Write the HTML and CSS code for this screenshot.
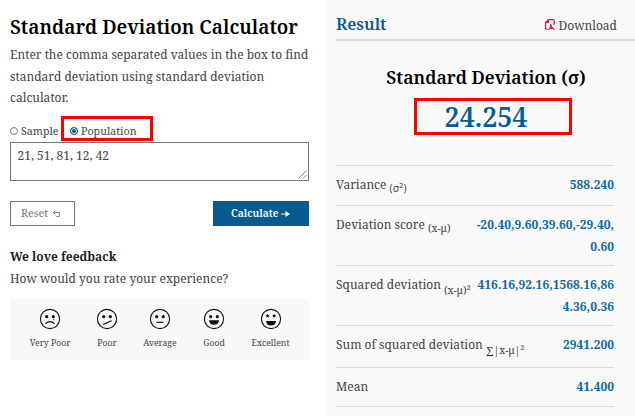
FILE: index.html
```html
<!DOCTYPE html>
<html lang="en">
<head>
<meta charset="utf-8">
<title>Standard Deviation Calculator</title>
<link rel="stylesheet" href="styles.css">
</head>
<body>
<main class="page">
  <section class="calculator">
    <h1 class="title">Standard Deviation Calculator</h1>
    <p class="intro"><span class="line">Enter the comma separated values in the box to find</span><span class="line">standard deviation using standard deviation</span><span class="line">calculator.</span></p>
    <div class="options">
      <label class="option"><span class="radio"></span><span class="sample">Sample</span></label>
      <label class="option selected"><span class="radio checked"></span><span class="population">Population</span></label>
    </div>
    <div class="values"><span>21, 51, 81, 12, 42</span>
      <svg class="grip" width="9" height="9" viewBox="0 0 9 9"><path d="M.5 8.500l8-8M5 8.500l3.500-3.500"/></svg>
    </div>
    <div class="actions">
      <div class="button reset"><span>Reset</span>
        <svg width="8" height="8" viewBox="0 0 8 8"><path d="M2.500 .5L.5 2.500 2.500 4.500M.5 2.500H6.500V6.500H3.500" fill="none" stroke="currentColor" stroke-width=".9"/></svg>
      </div>
      <div class="button calculate"><span>Calculate</span>
        <svg width="9" height="6" viewBox="0 0 9 6"><path d="M0 3h5" stroke="currentColor"/><path d="M4.500 0L9 3 4.500 6z" fill="currentColor"/></svg>
      </div>
    </div>
    <h2 class="feedback-title">We love feedback</h2>
    <p class="question">How would you rate your experience?</p>
    <div class="ratings">
      <div class="rating">
        <svg class="face" viewBox="0 0 22 22"><circle class="ring" cx="11" cy="11" r="9.600"/><circle cx="7.700" cy="8.700" r="1.600"/><circle cx="14.300" cy="8.700" r="1.600"/><path class="mouth" d="M6.500 15.800Q11 11.500 15.500 15.800"/><circle cx="14.700" cy="11.700" r=".6"/></svg>
        <span>Very Poor</span>
      </div>
      <div class="rating">
        <svg class="face" viewBox="0 0 22 22"><circle class="ring" cx="11" cy="11" r="9.600"/><circle cx="7.700" cy="8.700" r="1.600"/><circle cx="14.300" cy="8.700" r="1.600"/><path class="mouth" d="M6.800 16.500Q9 16 11 14.800T15.700 12.700"/></svg>
        <span>Poor</span>
      </div>
      <div class="rating">
        <svg class="face" viewBox="0 0 22 22"><circle class="ring" cx="11" cy="11" r="9.600"/><circle cx="7.700" cy="8.700" r="1.600"/><circle cx="14.300" cy="8.700" r="1.600"/><path class="mouth" d="M7.500 14.300H14.500"/></svg>
        <span>Average</span>
      </div>
      <div class="rating">
        <svg class="face" viewBox="0 0 22 22"><circle class="ring" cx="11" cy="11" r="9.600"/><circle cx="7.700" cy="8.700" r="1.600"/><circle cx="14.300" cy="8.700" r="1.600"/><path d="M6 12.300H16Q15.500 16.800 11 16.800T6 12.300z"/></svg>
        <span>Good</span>
      </div>
      <div class="rating">
        <svg class="face" viewBox="0 0 22 22"><circle class="ring" cx="11" cy="11" r="9.600"/><path d="M7.700 5.700l.5 1.300 1.500.2-1.100 1 .2 1.400-1.200-.7-1.300.7.3-1.400L5.500 7.200 7 7zM14.300 5.700l.5 1.300 1.500.2-1.100 1 .2 1.400-1.200-.7-1.300.7.3-1.400-1-1 1.500-.2zM6 13H16Q15.500 17.500 11 17.500T6 13z"/></svg>
        <span>Excellent</span>
      </div>
    </div>
  </section>
  <section class="result">
    <header class="result-head">
      <h2 class="result-title">Result</h2>
      <div class="download">
        <svg width="10" height="12" viewBox="0 0 10 12"><path d="M3.500.6H8.200Q9.200.6 9.200 1.600V6M3.500.6L.6 3.500V9.200Q.6 10.200 1.600 10.200H2.500M.6 3.500H3.500V.6M5.500 5Q6 8.500 9.500 10.500M5.800 5.500Q5.500 9.500 3.500 11M4.500 9.400H8.500" fill="none" stroke="#dc1830" stroke-width="1.200"/></svg>
        <span>Download</span>
      </div>
    </header>
    <h3 class="measure">Standard Deviation (σ)</h3>
    <div class="answer"><span>24.254</span></div>
    <dl class="stats">
      <div class="row w1"><dt>Variance <span class="symbol sans">(σ<sup>2</sup>)</span></dt><dd>588.240</dd></div>
      <div class="row w2"><dt>Deviation score <span class="symbol">(x-μ)</span></dt><dd>-20.40,9.60,39.60,-29.40,<br>0.60</dd></div>
      <div class="row w3"><dt>Squared deviation <span class="symbol low">(x-μ)²</span></dt><dd>416.16,92.16,1568.16,86<br>4.36,0.36</dd></div>
      <div class="row w4"><dt>Sum of squared deviation <span class="symbol low"><span class="sigma">∑</span>|x-μ|²</span></dt><dd>2941.200</dd></div>
      <div class="row w5"><dt>Mean</dt><dd>41.400</dd></div>
    </dl>
  </section>
</main>
</body>
</html>
```
FILE: styles.css
```css
* { box-sizing: border-box; }
body { margin: 0; background: #fff; color: #444; font-family: "Noto Serif", "Droid Serif", "DejaVu Serif Condensed", "DejaVu Serif", serif; font-size: 12px; }
h1, h2, h3, p, dl, dd { margin: 0; }
svg { display: block; flex: none; }
.page { display: grid; grid-template-columns: 326px 309px; width: 635px; height: 416px; overflow: hidden; white-space: nowrap; }
.calculator { padding: 14px 17px 0 10px; }
.title { color: #000; font-size: 19.15px; font-weight: 600; line-height: 27px; }
.intro { margin-top: 3px; line-height: 21.5px; font-size: 12px; }
.line { display: block; width: max-content; }
.options { display: flex; height: 25px; margin-top: 7.5px; }
.option { display: flex; align-items: center; gap: 3px; width: 51px; font-size: 10.7px; padding-top: 5px; }
.selected { width: 92px; border: 3px solid #f00; padding: 4px 0 0 6px; }
.radio { width: 8px; height: 8px; border: 1px solid #777; border-radius: 50%; background: #fff; flex: none; }
.checked { border-color: #075b91; background: #075b91; box-shadow: inset 0 0 0 1px #fff; }
.values { display: flex; justify-content: space-between; width: 299px; height: 39px; margin-top: 1px; border: 1px solid #767676; padding: 4px 1px 1px 6.5px; font-size: 12px; line-height: 17px; }
.grip { align-self: flex-end; fill: none; stroke: #555; stroke-width: .7; }
.actions { display: flex; justify-content: space-between; width: 299px; margin-top: 20px; }
.button { display: flex; align-items: center; height: 25px; font-size: 10.7px; }
.reset { width: 65px; border: 1px solid #767676; padding: 0 0 1px 10px; gap: 5px; color: #777; }
.calculate { width: 96px; background: #075b91; color: #fff; font-size: 10.300px; font-weight: 600; padding: 0 0 1px 18px; gap: 3px; }
.reset svg, .calculate svg { margin-top: 2px; }
.feedback-title { margin-top: 22px; color: #222; font-size: 12px; line-height: 18px; width: max-content; }
.question { margin-top: 4px; font-size: 12px; line-height: 18px; width: max-content; }
.ratings { display: grid; grid-template-columns: 60px 54px 52px 56px 57px; width: 299px; height: 61px; margin-top: 11px; padding: 9px 10px 0; background: #f8f8f8; }
.rating { display: flex; flex-direction: column; align-items: center; gap: 5px; font-size: 8.7px; line-height: 16px; }
.face { width: 22px; height: 22px; fill: #111; }
.ring { fill: none; stroke: #111; stroke-width: 1.1; }
.mouth { fill: none; stroke: #111; stroke-width: 1.2; }
.result { background: #f9f9f9; padding-left: 10px; }
.result-head { display: flex; justify-content: space-between; height: 41px; border-bottom: 2px solid #dcdcdc; padding: 13px 18px 0 0; }
.result-title { color: #075b91; font-size: 16.300px; font-weight: 600; line-height: 23px; }
.download { display: flex; align-items: center; gap: 3px; height: 24px; font-size: 12px; }
.measure { width: 300px; margin-top: 23px; text-align: center; color: #000; font-size: 17.700px; font-weight: 600; line-height: 26px; }
.answer { width: 158px; height: 37px; margin: 8px 0 0 78px; border: 3px solid #f00; padding-right: 14px; text-align: center; color: #075b91; font-size: 26.800px; font-weight: 600; line-height: 31px; }
.stats { width: 278px; margin-top: 30px; border-bottom: 1px solid #dcdcdc; font-size: 12px; line-height: 22px; }
.row { display: flex; justify-content: space-between; border-top: 1px solid #dcdcdc; padding-top: 8px; }
.w1 { height: 40px; }
.w2, .w3 { height: 60px; }
.w4 { height: 42px; }
.w5 { height: 39px; }
.row dd { color: #126a9f; font-weight: 700; text-align: right; }
.symbol { font-family: "Noto Serif", serif; font-size: 10.400px; line-height: 0; position: relative; top: 3px; }
.sans { font-family: "Open Sans", sans-serif; }
.symbol sup { font-size: 8px; line-height: 0; }
.low { top: 4.500px; }
.sigma { color: #000; }
```
